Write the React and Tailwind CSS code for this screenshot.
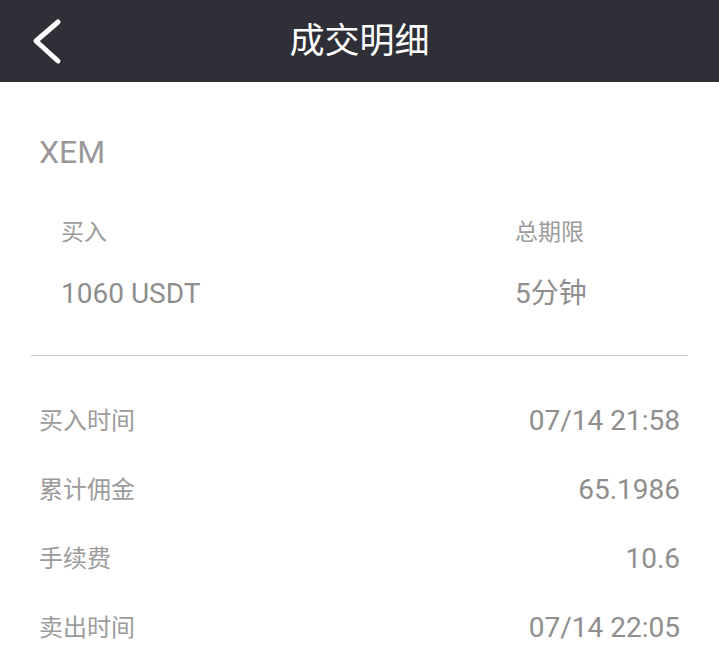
const rows = [
  { label: '买入时间', value: '07/14 21:58' },
  { label: '累计佣金', value: '65.1986' },
  { label: '手续费', value: '10.6' },
  { label: '卖出时间', value: '07/14 22:05' },
]

function App() {
  return (
    <div className="min-h-screen bg-white font-['Roboto','Noto_Sans_CJK_SC',sans-serif]">
      {/* Header */}
      <div className="h-[82px] bg-[#2e2f37] flex items-center relative">
        <button className="absolute left-[30px] top-[18px] w-[36px] h-[48px] flex items-center justify-center">
          <svg width="36" height="48" viewBox="0 0 36 48" fill="none">
            <path d="M28 4 L6 23 L28 43" stroke="white" strokeWidth="5" strokeLinecap="round" strokeLinejoin="round" />
          </svg>
        </button>
        <h1 className="w-full text-center text-white text-[35px] leading-none">成交明细</h1>
      </div>

      {/* Summary */}
      <div className="pt-[52px]">
        <div className="pl-[39px] text-[32px] leading-[36px] text-[#999999]">XEM</div>
        <div className="flex pl-[61px] mt-[51px]">
          <div className="w-[454px]">
            <div className="text-[23px] leading-[24px] text-[#9b9b9b]">买入</div>
            <div className="mt-[31px] text-[28px] leading-[36px] text-[#8e8e8e]">1060 USDT</div>
          </div>
          <div>
            <div className="text-[23px] leading-[24px] text-[#9b9b9b]">总期限</div>
            <div className="mt-[31px] text-[28px] leading-[36px] text-[#8e8e8e]">5分钟</div>
          </div>
        </div>
        <div className="mx-[31px] mt-[43px] h-px bg-[#c8c8c8]" />
      </div>

      {/* Detail rows */}
      <div className="pt-[30px] px-[39px] border-b-2 border-[#ececec]">
        {rows.map((row) => (
          <div key={row.label} className="h-[69px] flex items-center justify-between">
            <span className="text-[24px] text-[#9b9b9b]">{row.label}</span>
            <span className="text-[28px] text-[#8e8e8e]">{row.value}</span>
          </div>
        ))}
      </div>
    </div>
  )
}

export default App
